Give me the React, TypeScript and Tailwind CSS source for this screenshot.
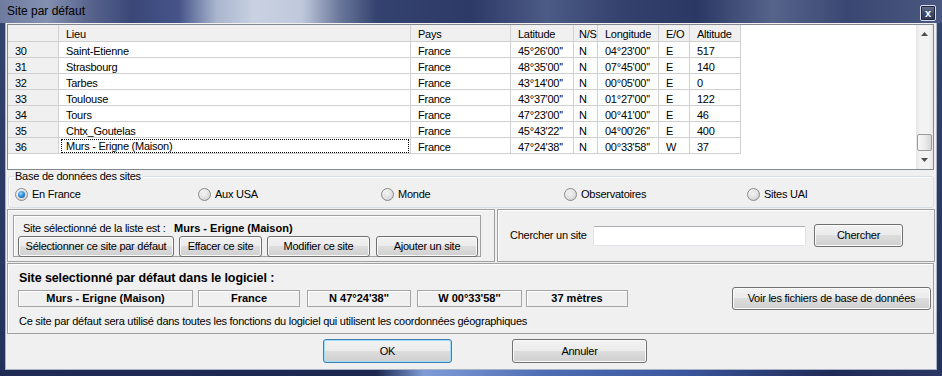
import React from "react";

const colW = ["w-[51px]", "w-[352px]", "w-[100px]", "w-[63px]", "w-[24px]", "w-[61px]", "w-[31px]", "w-[51px]"];
const colP = ["pl-[7px]", "pl-[7px]", "pl-[7px]", "pl-[7px]", "pl-[5px]", "pl-[7px]", "pl-[7px]", "pl-[7px]"];
const headers = ["", "Lieu", "Pays", "Latitude", "N/S", "Longitude", "E/O", "Altitude"];
const rows: string[][] = [
  ["30", "Saint-Etienne", "France", "45°26'00''", "N", "04°23'00''", "E", "517"],
  ["31", "Strasbourg", "France", "48°35'00''", "N", "07°45'00''", "E", "140"],
  ["32", "Tarbes", "France", "43°14'00''", "N", "00°05'00''", "E", "0"],
  ["33", "Toulouse", "France", "43°37'00''", "N", "01°27'00''", "E", "122"],
  ["34", "Tours", "France", "47°23'00''", "N", "00°41'00''", "E", "46"],
  ["35", "Chtx_Goutelas", "France", "45°43'22''", "N", "04°00'26''", "E", "400"],
  ["36", "Murs - Erigne (Maison)", "France", "47°24'38''", "N", "00°33'58''", "W", "37"],
];

const txt = "text-[11px] tracking-[-0.25px]";

function Btn({ children, className = "", def = false }: { children: React.ReactNode; className?: string; def?: boolean }) {
  return (
    <div
      className={
        (def
          ? "border-[#3c7fb1] shadow-[inset_0_0_0_1px_#9fdcf8] "
          : "border-[#707070] shadow-[inset_0_0_0_1px_#fbfbfb] ") +
        "flex items-center justify-center rounded-[3px] border bg-[linear-gradient(180deg,#f2f2f2_0%,#ebebeb_49%,#dddddd_50%,#cfcfcf_100%)] whitespace-nowrap text-[11px] tracking-[-0.25px] " +
        className
      }
    >
      {children}
    </div>
  );
}

function Radio({ checked }: { checked: boolean }) {
  return (
    <div className="w-[13px] h-[13px] rounded-full border border-[#8a8a8a] bg-[radial-gradient(circle_at_40%_35%,#ffffff_0%,#e6e6e6_45%,#c4c4c4_100%)] flex items-center justify-center shrink-0">
      {checked ? (
        <div className="w-[7px] h-[7px] rounded-full bg-[radial-gradient(circle_at_40%_35%,#9ad8fb_0%,#2d8ad8_50%,#0d4d94_100%)]" />
      ) : (
        <div className="w-[7px] h-[7px] rounded-full bg-[radial-gradient(circle_at_45%_40%,#f4f4f4_0%,#d8d8d8_100%)]" />
      )}
    </div>
  );
}

function Arrow({ up }: { up: boolean }) {
  return (
    <svg width="7" height="4" viewBox="0 0 7 4">
      {up ? <polygon points="0,4 7,4 3.5,0" fill="#4d4d4d" /> : <polygon points="0,0 7,0 3.5,4" fill="#4d4d4d" />}
    </svg>
  );
}

function Grid() {
  return (
    <div className="ml-[1px] mt-[1px] w-[927px] h-[146px] border border-[#828790] bg-white flex">
      <div className="flex-1 flex flex-col">
        <div className="flex h-[17px]">
          {headers.map((h, i) => (
            <div key={i} className={colW[i] + " " + colP[i] + " h-full pt-[3px] border-r border-b border-[#d0d0d0] bg-[#f0f0f0] flex items-center whitespace-nowrap overflow-hidden " + txt}>
              {h}
            </div>
          ))}
        </div>
        {rows.map((r, ri) => (
          <div key={ri} className="flex h-[16px]">
            {r.map((c, i) => {
              const focus = ri === 6 && i === 1;
              const bg = i === 0 ? "bg-[#f0f0f0]" : "bg-white";
              if (focus) {
                return (
                  <div key={i} className={colW[i] + " h-full border-r border-b border-[#d0d0d0] bg-white flex items-center " + txt}>
                    <div className="flex-1 h-[14px] ml-[2px] mr-[1px] pt-[2px] border border-dotted border-black flex items-center pl-[4px] whitespace-nowrap">
                      {c}
                    </div>
                  </div>
                );
              }
              return (
                <div key={i} className={colW[i] + " " + colP[i] + " h-full pt-[3px] border-r border-b border-[#d0d0d0] flex items-center whitespace-nowrap overflow-hidden " + bg + " " + txt}>
                  {c}
                </div>
              );
            })}
          </div>
        ))}
      </div>
      <div className="w-[17px] h-full flex flex-col bg-[linear-gradient(90deg,#e6e6e6_0%,#f3f3f3_25%,#f3f3f3_75%,#e6e6e6_100%)]">
        <div className="h-[17px] flex items-center justify-center">
          <Arrow up />
        </div>
        <div className="flex-1" />
        <div className="h-[17px] mx-[1px] rounded-[2px] border border-[#9b9b9b] bg-[linear-gradient(90deg,#f8f8f8_0%,#ececec_50%,#d6d6d6_100%)]" />
        <div className="h-[18px] flex items-center justify-center">
          <Arrow up={false} />
        </div>
      </div>
    </div>
  );
}

const radios: [string, boolean][] = [
  ["En France", true],
  ["Aux USA", false],
  ["Monde", false],
  ["Observatoires", false],
  ["Sites UAI", false],
];

const panel = "border border-[#a0a0a0] shadow-[inset_1px_1px_0_#ffffff]";
const cell = "h-[17px] flex items-center justify-center border border-[#a5a5a5] shadow-[inset_1px_1px_0_#ffffff] font-bold text-[11px] whitespace-nowrap";

export default function App() {
  return (
    <div className="w-[942px] h-[376px] overflow-hidden flex flex-col bg-[linear-gradient(180deg,#35436f_0%,#24315c_100%)] font-['Liberation_Sans',Arial,sans-serif] text-black">
      {/* title bar */}
      <div className="h-[23px] flex items-start bg-[linear-gradient(90deg,#6e7b9f_0%,#8490b0_5%,#5c6890_9%,#3a4777_14%,#46548a_19%,#aab6ce_23%,#c9d1e2_27%,#c0c9dc_32%,#6b789c_36%,#34426f_40%,#2d3a67_50%,#4c5a86_58%,#34416d_66%,#2b3864_74%,#56648c_82%,#3a4772_90%,#4a5780_100%)]">
        <div className="pl-[7px] pt-[4px] text-[12px] leading-[14px]">Site par défaut</div>
        <div className="ml-auto mr-[6px] mt-[5px] w-[16px] h-[16px] border border-[#d6dbe6] rounded-[2px] bg-[linear-gradient(180deg,#6a7592_0%,#3f4a69_50%,#2e3855_100%)] shadow-[inset_0_0_0_1px_#1e2640] flex items-center justify-center text-white text-[11px] font-bold leading-none">
          x
        </div>
      </div>

      {/* content */}
      <div className="ml-[5px] w-[932px] h-[347px] bg-[#f0f0f0] border-x border-b border-[#a9b3c8] flex flex-col">
        <Grid />

        <fieldset className="ml-[2px] w-[926px] h-[38px] border border-[#d5dfe5] rounded-[3px] shadow-[inset_1px_1px_0_#ffffff]">
          <legend className={"ml-[5px] px-[1px] leading-[13px] " + txt}>Base de données des sites</legend>
          <div className="flex pl-[6px] h-[22px] pt-[1px] items-center">
            {radios.map(([l, c]) => (
              <div key={l} className="w-[183px] flex items-center">
                <Radio checked={c} />
                <span className={"ml-[4px] " + txt}>{l}</span>
              </div>
            ))}
          </div>
        </fieldset>

        {/* middle */}
        <div className="mt-[1px] h-[53px] flex">
          <div className={"ml-[1px] w-[488px] h-full " + panel}>
            <div className={"ml-[5px] mt-[5px] w-[468px] h-[42px] pl-[4px] pt-[5px] " + panel}>
              <div className="h-[14px] flex items-center pl-[5px]">
                <span className={"w-[151px] " + txt}>Site sélectionné de la liste est :</span>
                <span className="font-bold text-[11px]">Murs - Erigne (Maison)</span>
              </div>
              <div className="mt-[1px] flex">
                <Btn className="w-[156px] h-[21px]">Sélectionner ce site par défaut</Btn>
                <Btn className="ml-[5px] w-[83px] h-[21px]">Effacer ce site</Btn>
                <Btn className="ml-[5px] w-[103px] h-[21px]">Modifier ce site</Btn>
                <Btn className="ml-[6px] w-[102px] h-[21px]">Ajouter un site</Btn>
              </div>
            </div>
          </div>
          <div className={"ml-[2px] w-[438px] h-full flex items-center pl-[12px] " + panel}>
            <span className={"w-[83px] " + txt}>Chercher un site</span>
            <div className="w-[213px] h-[20px] bg-white border border-[#e2e3ea] border-t-[#abadb3] rounded-[2px]" />
            <Btn className="ml-[8px] w-[89px] h-[23px]">Chercher</Btn>
          </div>
        </div>

        {/* bottom panel */}
        <div className={"mt-[1px] ml-[1px] w-[927px] h-[71px] " + panel}>
          <div className="pl-[11px] pt-[7px] font-bold text-[12.5px] leading-[15px] tracking-[-0.1px]">
            Site selectionné par défaut dans le logiciel :
          </div>
          <div className="h-[25px] flex items-center pl-[10px]">
            <div className={"w-[175px] " + cell}>Murs - Erigne (Maison)</div>
            <div className={"ml-[5px] w-[102px] " + cell}>France</div>
            <div className={"ml-[7px] w-[104px] " + cell}>N 47°24'38''</div>
            <div className={"ml-[6px] w-[105px] " + cell}>W 00°33'58''</div>
            <div className={"ml-[4px] w-[102px] " + cell}>37 mètres</div>
            <Btn className="ml-[104px] w-[199px] h-[23px]">Voir les fichiers de base de données</Btn>
          </div>
          <div className={"mt-[3px] pl-[11px] h-[14px] flex items-center " + txt}>
            Ce site par défaut sera utilisé dans toutes les fonctions du logiciel qui utilisent les coordonnées géographiques
          </div>
        </div>

        {/* dialog buttons */}
        <div className="mt-[5px] flex">
          <Btn def className="ml-[317px] w-[129px] h-[24px]">OK</Btn>
          <Btn className="ml-[60px] w-[135px] h-[24px]">Annuler</Btn>
        </div>
      </div>

      {/* bottom frame */}
      <div className="flex-1 bg-[linear-gradient(90deg,#1f2b55_0%,#1c2850_40%,#7f9cd8_45%,#4e6cb2_58%,#3b58a0_72%,#1f2b57_88%,#2a3762_100%)]" />
    </div>
  );
}
